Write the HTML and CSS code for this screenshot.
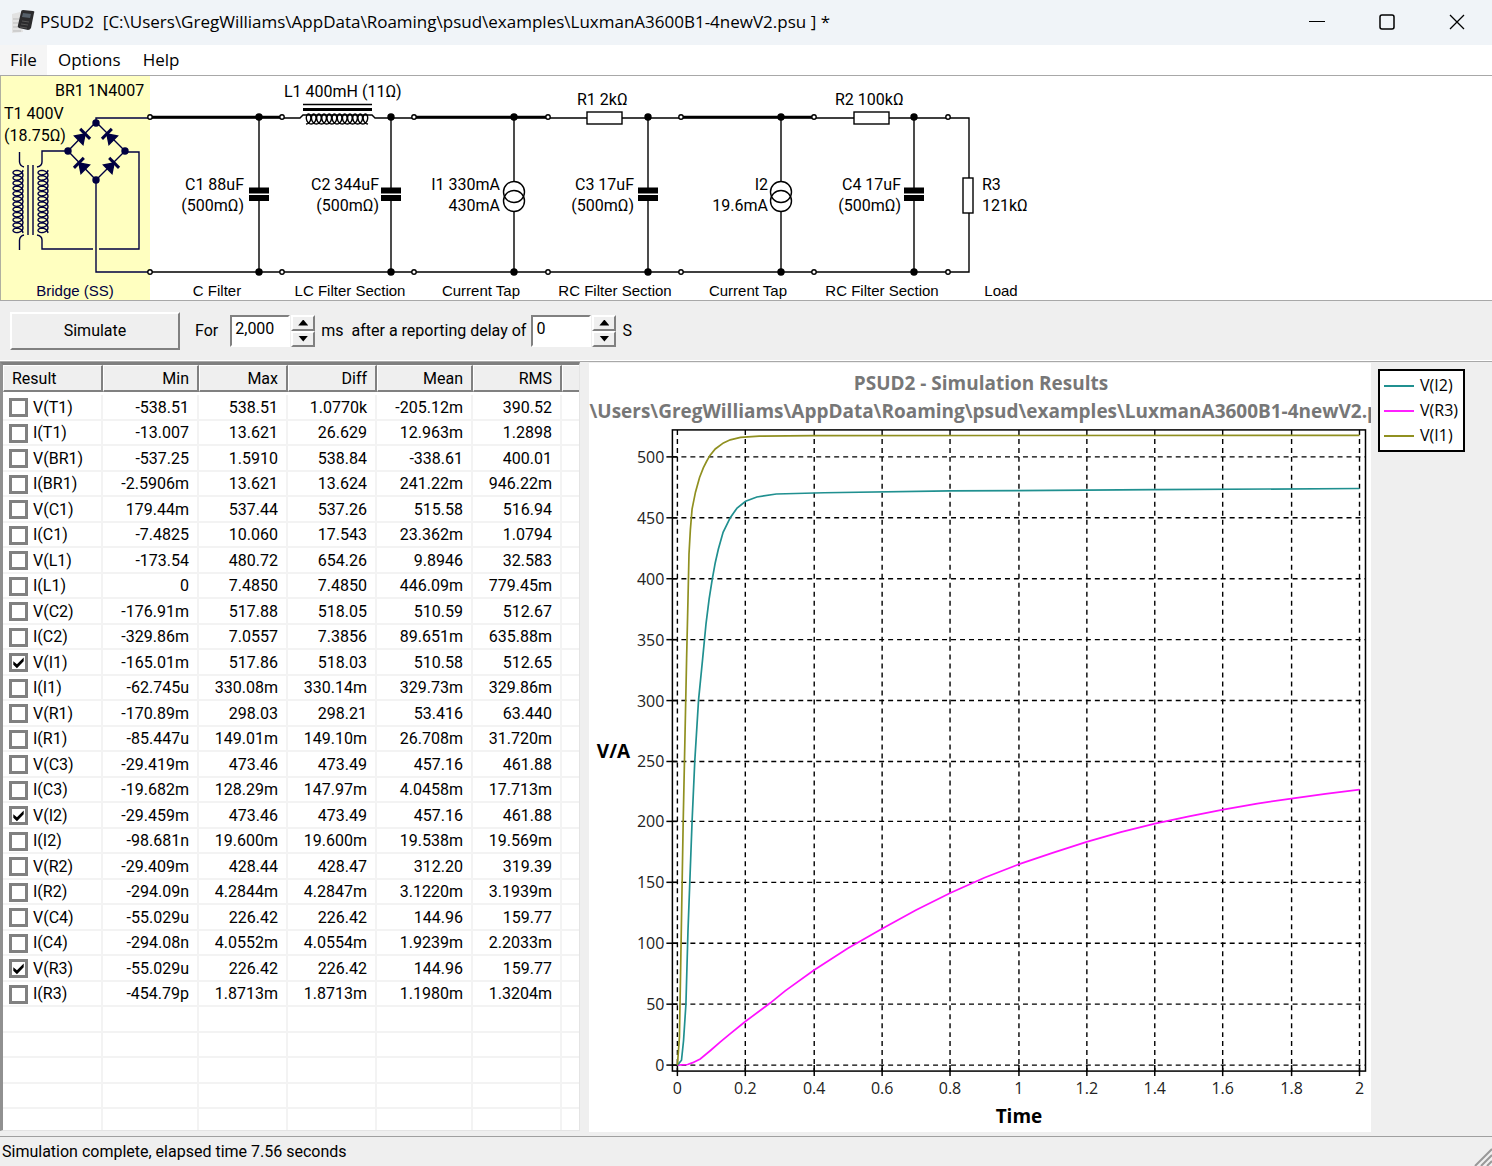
FILE: index.html
```html
<!DOCTYPE html>
<html lang="en">

<head>
    <meta charset="UTF-8" />
    <title>PSUD2</title>
    <link rel="stylesheet" href="styles.css">
</head>

<body>
    <header class="titlebar">
        <svg class="app-icon" width="24" height="26" viewBox="0 0 24 26">
            <path d="M1 5l8-2 3 20-11 1z" fill="#e2e2e2" />
            <path d="M2 10h6M2 14h5M2 18h5M2 22h8" stroke="#bbb" />
            <path d="M12 1l10 1q2 0 1 2l-3 15q-1 2-3 2l-9-2q-2-1-1-3l3-13q0-2 2-2z" fill="#2b2b2d" />
            <path d="M12 4l8 1-1 4-8-1z" fill="#56606a" />
            <path d="M11 12l7 1M10 15l7 1M9 18l7 1" stroke="#555" />
        </svg>
        <h1 class="title">PSUD2&nbsp; [C:\Users\GregWilliams\AppData\Roaming\psud\examples\LuxmanA3600B1-4newV2.psu ] *</h1>
        <div class="window-buttons">
            <button type="button" aria-label="Minimize">
                <svg width="16" height="16"><path d="M0 7.5h16" stroke="#000" /></svg>
            </button>
            <button type="button" aria-label="Maximize">
                <svg width="16" height="16"><rect x="1" y="1" width="14" height="14" rx="2" fill="none" stroke="#000" stroke-width="1.5" /></svg>
            </button>
            <button type="button" aria-label="Close">
                <svg width="16" height="16"><path d="M1 1l14 14M15 1l-14 14" stroke="#000" stroke-width="1.3" /></svg>
            </button>
        </div>
    </header>

    <nav class="menu">
        <button type="button" class="active">File</button>
        <button type="button">Options</button>
        <button type="button">Help</button>
    </nav>

    <section class="schematic">
        <svg width="1100" height="224" viewBox="0 0 1100 224">
            <defs>
                <g id="diode">
                    <path d="M-6 -6V6L3 0z" />
                    <path d="M3 -7V7" stroke-width="3" />
                </g>
                <g id="capacitor">
                    <path d="M0 42V112M0 125V196" />
                    <path d="M-10 114.5H10M-10 122H10" stroke-width="6" />
                </g>
                <g id="source">
                    <path d="M0 42V105M0 135V196" />
                    <circle cy="116" r="10.5" fill="none" />
                    <circle cy="125" r="10.5" fill="none" />
                </g>
                <circle id="dot" r="3" />
                <circle id="terminal" r="2.2" fill="#fff" />
            </defs>

            <rect x="0" y="0" width="150" height="224" fill="#ffffc0" />
            <path d="M0.5 0V224" stroke="#b0b0a0" />

            <!-- transformer and bridge -->
            <g class="wire navy">
                <path d="M19.5 76V86Q20 90 24 91M19.5 174V164Q20 160 24 159" />
                <path d="M68 75H42V86Q42 90 37 91M37 159Q42 160 42 164V173H93M99 173H139V76H125" />
                <path d="M28 89V159M33 89V159" />
                <path id="coilPrimary" />
                <path id="coilSecondary" />
                <path d="M96 46V42H148M96 46L68 75L96 104L125 75ZM96 104V196H148" />
                <g class="solid">
                    <use href="#dot" x="96" y="47" />
                    <use href="#dot" x="68" y="75" />
                    <use href="#dot" x="125" y="75" />
                    <use href="#dot" x="96" y="104" />
                    <use href="#diode" transform="translate(83 60) rotate(-45)" />
                    <use href="#diode" transform="translate(109 60) rotate(-135)" />
                    <use href="#diode" transform="translate(81 89) rotate(-135)" />
                    <use href="#diode" transform="translate(112 89) rotate(-45)" />
                </g>
            </g>

            <!-- rails -->
            <g class="wire">
                <path d="M150 196H969V42H150" />
                <path d="M152 41H281M416 41H547M683 41H813" stroke-width="2.6" />
                <rect x="282" y="38" width="108" height="8" fill="#fff" stroke="none" />
                <path d="M283 42H300L303 39H372L375 42H391M303 28.5H372" />
                <path d="M303 33.5H372" stroke-width="3" />
                <path id="coilChoke" />
                <use href="#capacitor" x="259" />
                <use href="#capacitor" x="391" />
                <use href="#source" x="514" />
                <use href="#capacitor" x="648" />
                <use href="#source" x="781" />
                <use href="#capacitor" x="914" />
                <rect x="587" y="36" width="35" height="12" fill="#fff" />
                <rect x="854" y="36" width="35" height="12" fill="#fff" />
                <rect x="963" y="102" width="10" height="35" fill="#fff" />
                <g id="nodes"></g>
            </g>

            <g class="part">
                <text x="55" y="20">BR1 1N4007</text>
                <text x="4" y="43">T1 400V</text>
                <text x="4" y="65">(18.75Ω)</text>
                <text x="284" y="21">L1 400mH (11Ω)</text>
                <text x="577" y="29">R1 2kΩ</text>
                <text x="835" y="29">R2 100kΩ</text>
                <text x="982" y="114">R3</text>
                <text x="982" y="135">121kΩ</text>
            </g>
            <g class="part right">
                <text x="244" y="114">C1 88uF</text>
                <text x="244" y="135">(500mΩ)</text>
                <text x="379" y="114">C2 344uF</text>
                <text x="379" y="135">(500mΩ)</text>
                <text x="500" y="114">I1 330mA</text>
                <text x="500" y="135">430mA</text>
                <text x="634" y="114">C3 17uF</text>
                <text x="634" y="135">(500mΩ)</text>
                <text x="768" y="114">I2</text>
                <text x="768" y="135">19.6mA</text>
                <text x="901" y="114">C4 17uF</text>
                <text x="901" y="135">(500mΩ)</text>
            </g>
            <g class="section-name">
                <text x="75" y="220" class="navy-text">Bridge (SS)</text>
                <text x="217" y="220">C Filter</text>
                <text x="350" y="220">LC Filter Section</text>
                <text x="481" y="220">Current Tap</text>
                <text x="615" y="220">RC Filter Section</text>
                <text x="748" y="220">Current Tap</text>
                <text x="882" y="220">RC Filter Section</text>
                <text x="1001" y="220">Load</text>
            </g>
        </svg>
    </section>

    <form class="toolbar" onsubmit="return false">
        <button type="submit" class="simulate">Simulate</button>
        <label for="duration">For</label>
        <div class="spinner">
            <input id="duration" type="text" value="2,000" />
            <div class="arrows">
                <button type="button" aria-label="Increase duration"><i class="up"></i></button>
                <button type="button" aria-label="Decrease duration"><i class="down"></i></button>
            </div>
        </div>
        <span class="unit">ms</span>
        <label for="delay" class="delay">after a reporting delay of</label>
        <div class="spinner">
            <input id="delay" type="text" value="0" />
            <div class="arrows">
                <button type="button" aria-label="Increase delay"><i class="up"></i></button>
                <button type="button" aria-label="Decrease delay"><i class="down"></i></button>
            </div>
        </div>
        <span class="unit">S</span>
    </form>

    <main class="main">
        <div class="results">
            <table>
                <colgroup>
                    <col class="c-name"><col class="c-wide"><col class="c-mid"><col class="c-mid"><col class="c-wide"><col class="c-mid"><col>
                </colgroup>
                <thead>
                    <tr>
                        <th>Result</th>
                        <th>Min</th>
                        <th>Max</th>
                        <th>Diff</th>
                        <th>Mean</th>
                        <th>RMS</th>
                        <th></th>
                    </tr>
                </thead>
                <tbody id="resultRows"></tbody>
            </table>
        </div>

        <div class="chart">
            <svg id="chart" viewBox="0 0 782 770">
                <text class="chart-title" x="392" y="27">PSUD2 - Simulation Results</text>
                <text class="chart-path" x="0" y="55">\Users\GregWilliams\AppData\Roaming\psud\examples\LuxmanA3600B1-4newV2.psu</text>
                <g id="grid"></g>
                <rect x="83" y="67" width="694" height="642" fill="none" stroke="#000" stroke-width="1.5" />
                <g id="curves"></g>
                <text class="axis-title" x="24" y="396">V/A</text>
                <text class="axis-title" x="430" y="761">Time</text>
            </svg>
        </div>

        <aside class="side">
            <ul class="legend">
                <li><span class="line teal"></span>V(I2)</li>
                <li><span class="line magenta"></span>V(R3)</li>
                <li><span class="line olive"></span>V(I1)</li>
            </ul>
        </aside>
    </main>

    <footer class="status">
        <span>Simulation complete, elapsed time 7.56 seconds</span>
        <svg class="grip" width="18" height="18"><path d="M1 18L18 1M7 18L18 7M13 18L18 13" stroke="#999" stroke-width="2" /></svg>
    </footer>

    <script src="app.js"></script>
</body>

</html>
```
FILE: styles.css
```css
* {
    box-sizing: border-box;
}

body {
    margin: 0;
    height: 100vh;
    display: flex;
    flex-direction: column;
    overflow: hidden;
    background: #efefef;
    color: #000;
    font-family: Roboto, "Liberation Sans", sans-serif;
    font-size: 16px;
}

button,
input {
    font: inherit;
    color: inherit;
    margin: 0;
}

.titlebar {
    flex: none;
    display: flex;
    align-items: center;
    height: 45px;
    padding: 0 0 2px 11px;
    background: #f0f4f8;
}

.app-icon {
    flex: none;
    margin-right: 5px;
}

.title {
    flex: 1;
    margin: 0;
    font-family: "Open Sans", "Noto Sans", sans-serif;
    font-size: 17px;
    font-weight: normal;
    line-height: 24px;
    white-space: nowrap;
}

.window-buttons {
    display: flex;
    align-self: stretch;
}

.window-buttons button {
    display: flex;
    align-items: center;
    justify-content: center;
    width: 70px;
    padding: 0;
    border: none;
    background: none;
}

.menu {
    flex: none;
    display: flex;
    height: 30px;
    background: #fff;
}

.menu button {
    padding: 0 11px 2px;
    border: none;
    background: none;
    font-family: "Open Sans", "Noto Sans", sans-serif;
    font-size: 17px;
}

.menu .active {
    padding: 0 10px 2px;
    background: #f5f5f5;
}

.schematic {
    flex: none;
    background: #fff;
    border-top: 1px solid #a8a8a8;
    border-bottom: 1px solid #a8a8a8;
    overflow: hidden;
}

.schematic svg,
.chart svg {
    display: block;
}

.wire {
    fill: none;
    stroke: #000;
    stroke-width: 1.4;
}

.navy {
    stroke: #000040;
}

.solid {
    fill: #000040;
}

.filled {
    fill: #000;
}

.right {
    text-anchor: end;
}

.section-name {
    font-family: "Liberation Sans", Arial, sans-serif;
    font-size: 15px;
    text-anchor: middle;
}

.navy-text {
    fill: #000040;
}

.toolbar {
    flex: none;
    display: flex;
    align-items: center;
    height: 60px;
    padding-left: 10px;
    border-bottom: 1px solid #fff;
}

.simulate,
.arrows button {
    background: #efefef;
    border: 2px solid;
    border-color: #fff #808080 #808080 #fff;
}

.simulate {
    width: 170px;
    height: 38px;
    margin-right: 15px;
    padding: 0;
}

.spinner {
    display: flex;
    gap: 1px;
    margin: 0 6px 0 12px;
}

.spinner input {
    width: 60px;
    height: 32px;
    padding: 0 3px 4px;
    background: #fff;
    border: 2px solid;
    border-color: #808080 #fff #fff #808080;
    border-radius: 0;
    outline: none;
}

.arrows {
    display: flex;
    flex-direction: column;
}

.arrows button {
    display: flex;
    align-items: center;
    justify-content: center;
    width: 24px;
    height: 16px;
    padding: 0;
}

.up,
.down {
    width: 10px;
    height: 6px;
    background: #000;
    clip-path: polygon(50% 0, 100% 100%, 0 100%);
}

.down {
    clip-path: polygon(0 0, 100% 0, 50% 100%);
}

.delay {
    margin-left: 8px;
}

.delay + .spinner {
    margin-left: 5px;
}

.main {
    flex: 1;
    min-height: 0;
    display: flex;
    border-top: 1px solid #a8a8a8;
}

.results {
    flex: none;
    width: 580px;
    margin-bottom: 5px;
    background: #fff;
    border-top: 3px solid #808080;
    border-left: 3px solid #909090;
    border-bottom: 1px solid #e4e4e4;
    border-right: 1px solid #e4e4e4;
    overflow: hidden;
}

table {
    width: 100%;
    table-layout: fixed;
    border-spacing: 0;
}

.c-name {
    width: 100px;
}

.c-wide {
    width: 96px;
}

.c-mid {
    width: 89px;
}

th {
    height: 27px;
    padding: 1px 8px 0;
    background: #efefef;
    border: solid;
    border-width: 1px 2px 2px 1px;
    border-color: #fff #808080 #808080 #fff;
    font-weight: normal;
    text-align: right;
}

th:first-child {
    text-align: left;
}

th:last-child {
    border-right: none;
}

tbody::before {
    content: "";
    display: table-row;
    height: 3px;
}

td {
    height: 25px;
    padding: 1px 8px 0;
    border-right: 2px solid #f3f3f3;
    border-bottom: 2px solid #f3f3f3;
    line-height: 20px;
    text-align: right;
}

tr:nth-child(odd) td {
    height: 26px;
}

td:first-child {
    padding: 1px 0 0 6px;
    text-align: left;
}

td:last-child {
    border-right: none;
}

td label {
    display: flex;
    align-items: center;
    gap: 5px;
}

td input {
    appearance: none;
    width: 19px;
    height: 19px;
    background: #fff;
    border: 3px solid #808080;
}

td input:checked::before {
    content: "";
    display: block;
    height: 13px;
    background: #000;
    clip-path: polygon(10% 40%, 38% 64%, 90% 12%, 90% 40%, 38% 94%, 10% 68%);
}

.chart {
    flex: 1;
    min-width: 0;
    margin: 1px 0 4px 9px;
    background: #fff;
}

.chart svg {
    width: 100%;
    height: 100%;
    overflow: hidden;
    font-family: "Open Sans", "Noto Sans", sans-serif;
}

.chart-title,
.chart-path {
    font-size: 19px;
    font-weight: bold;
    fill: #777;
}

.chart-title,
.axis-title,
.x-label {
    text-anchor: middle;
}

.axis-title {
    font-size: 19px;
    font-weight: bold;
}

.x-label,
.y-label {
    font-size: 16px;
    fill: #222;
}

.y-label {
    text-anchor: end;
}

.grid-line {
    stroke: #000;
    stroke-width: 1.4;
    stroke-dasharray: 5 4;
}

.tick {
    stroke: #000;
    stroke-width: 1.5;
}

.curve {
    fill: none;
    stroke-width: 1.7;
}

.side {
    flex: none;
    width: 121px;
    padding: 7px;
}

.legend {
    width: 87px;
    margin: 0;
    padding: 2px 4px;
    list-style: none;
    background: #fff;
    border: 2px solid #000;
    font-family: "Open Sans", "Noto Sans", sans-serif;
    font-size: 16px;
    line-height: 25px;
}

.legend li {
    display: flex;
    align-items: center;
    gap: 6px;
}

.line {
    width: 30px;
    height: 2px;
}

.teal {
    background: #209090;
}

.magenta {
    background: #ff20ff;
}

.olive {
    background: #909020;
}

.status {
    flex: none;
    display: flex;
    align-items: center;
    justify-content: space-between;
    height: 30px;
    padding-left: 2px;
    border-top: 1px solid #a0a0a0;
}

.grip {
    align-self: flex-end;
}
```
FILE: app.js
```js
const results = [
    ["V(T1)", "-538.51", "538.51", "1.0770k", "-205.12m", "390.52"],
    ["I(T1)", "-13.007", "13.621", "26.629", "12.963m", "1.2898"],
    ["V(BR1)", "-537.25", "1.5910", "538.84", "-338.61", "400.01"],
    ["I(BR1)", "-2.5906m", "13.621", "13.624", "241.22m", "946.22m"],
    ["V(C1)", "179.44m", "537.44", "537.26", "515.58", "516.94"],
    ["I(C1)", "-7.4825", "10.060", "17.543", "23.362m", "1.0794"],
    ["V(L1)", "-173.54", "480.72", "654.26", "9.8946", "32.583"],
    ["I(L1)", "0", "7.4850", "7.4850", "446.09m", "779.45m"],
    ["V(C2)", "-176.91m", "517.88", "518.05", "510.59", "512.67"],
    ["I(C2)", "-329.86m", "7.0557", "7.3856", "89.651m", "635.88m"],
    ["V(I1)", "-165.01m", "517.86", "518.03", "510.58", "512.65"],
    ["I(I1)", "-62.745u", "330.08m", "330.14m", "329.73m", "329.86m"],
    ["V(R1)", "-170.89m", "298.03", "298.21", "53.416", "63.440"],
    ["I(R1)", "-85.447u", "149.01m", "149.10m", "26.708m", "31.720m"],
    ["V(C3)", "-29.419m", "473.46", "473.49", "457.16", "461.88"],
    ["I(C3)", "-19.682m", "128.29m", "147.97m", "4.0458m", "17.713m"],
    ["V(I2)", "-29.459m", "473.46", "473.49", "457.16", "461.88"],
    ["I(I2)", "-98.681n", "19.600m", "19.600m", "19.538m", "19.569m"],
    ["V(R2)", "-29.409m", "428.44", "428.47", "312.20", "319.39"],
    ["I(R2)", "-294.09n", "4.2844m", "4.2847m", "3.1220m", "3.1939m"],
    ["V(C4)", "-55.029u", "226.42", "226.42", "144.96", "159.77"],
    ["I(C4)", "-294.08n", "4.0552m", "4.0554m", "1.9239m", "2.2033m"],
    ["V(R3)", "-55.029u", "226.42", "226.42", "144.96", "159.77"],
    ["I(R3)", "-454.79p", "1.8713m", "1.8713m", "1.1980m", "1.3204m"]
];
const plotted = ["V(I1)", "V(I2)", "V(R3)"];
const blankRows = 5;

// plot area: pixel position of the origin and pixels per unit
const origin = { x: 88, y: 703 };
const scale = { x: 341.5, y: 1.218 };

// [seconds, volts]
const curves = [
    {
        color: "#ff10ff",
        points: [[0, 0], [0.03, 0.5], [0.045, 2], [0.067, 5], [0.097, 12], [0.126, 19], [0.149, 24.5], [0.2, 36],
            [0.272, 51], [0.316, 61], [0.4, 78], [0.5, 96], [0.6, 112], [0.7, 127.5], [0.8, 141.5], [0.9, 154], [1, 165],
            [1.1, 174.5], [1.2, 183.5], [1.3, 191.5], [1.4, 198.5], [1.5, 204.5], [1.6, 210], [1.7, 215], [1.8, 219], [1.9, 223], [2, 226.5]]
    },
    {
        color: "#209090",
        points: [[0, 0], [0.012, 4], [0.018, 20], [0.025, 50], [0.031, 110], [0.043, 200], [0.051, 250], [0.062, 300],
            [0.074, 334], [0.084, 363], [0.093, 383], [0.102, 399], [0.111, 413], [0.12, 424], [0.134, 438], [0.155, 450],
            [0.175, 458], [0.2, 463.5], [0.233, 467], [0.29, 469.5], [0.43, 470.5], [0.8, 472], [1.4, 473], [2, 474]]
    },
    {
        color: "#909020",
        points: [[0, 0], [0.006, 23], [0.01, 87], [0.017, 200], [0.027, 334], [0.031, 382], [0.034, 420], [0.038, 440],
            [0.043, 457], [0.053, 471], [0.065, 483], [0.076, 491], [0.085, 496], [0.095, 501], [0.111, 506.5],
            [0.135, 511.5], [0.155, 514], [0.185, 516], [0.24, 517], [0.4, 517.5], [2, 517.7]]
    }
];

function svgEl(parent, name, attrs, text) {
    const el = document.createElementNS("http://www.w3.org/2000/svg", name);
    for (const key in attrs) {
        el.setAttribute(key, attrs[key]);
    }
    if (text !== undefined) el.textContent = text;
    parent.appendChild(el);
    return el;
}

function renderRows() {
    const body = document.getElementById("resultRows");
    results.forEach(row => {
        const tr = body.insertRow();
        const label = document.createElement("label");
        const box = document.createElement("input");
        box.type = "checkbox";
        box.checked = plotted.includes(row[0]);
        label.append(box, row[0]);
        tr.insertCell().appendChild(label);
        row.slice(1).forEach(value => {
            tr.insertCell().textContent = value;
        });
        tr.insertCell();
    });
    for (let i = 0; i < blankRows; i++) {
        const tr = body.insertRow();
        for (let c = 0; c < 7; c++) tr.insertCell();
    }
}

function renderChart() {
    const grid = document.getElementById("grid");
    for (let i = 0; i <= 10; i++) {
        const x = Math.round(origin.x + i * 0.2 * scale.x);
        svgEl(grid, "path", { class: "grid-line", d: `M${x} 67V709` });
        svgEl(grid, "path", { class: "tick", d: `M${x} 703V714` });
        svgEl(grid, "text", { class: "x-label", x: x, y: 732 }, String(i * 2 / 10));

        const y = Math.round(origin.y - i * 50 * scale.y);
        svgEl(grid, "path", { class: "grid-line", d: `M83 ${y}H777` });
        svgEl(grid, "path", { class: "tick", d: `M77 ${y}H88` });
        svgEl(grid, "text", { class: "y-label", x: 75, y: y + 6 }, String(i * 50));
    }

    const group = document.getElementById("curves");
    curves.forEach(curve => {
        const points = curve.points.map(([t, v]) => `${origin.x + t * scale.x},${origin.y - v * scale.y}`);
        svgEl(group, "polyline", { class: "curve", stroke: curve.color, points: points.join(" ") });
    });
}

// winding drawn as a looping line from start to end
function coil(id, center, start, end, turns, vertical) {
    const r = 5;
    let d = "";
    for (let i = 0; i <= turns * 16; i++) {
        const a = i / 16 * Math.PI * 2;
        const along = start + (end - start) * i / (turns * 16) + 3.5 * Math.sin(a);
        const across = center + r * Math.cos(a);
        d += (i ? "L" : "M") + (vertical ? `${across} ${along}` : `${along} ${across}`);
    }
    document.getElementById(id).setAttribute("d", d);
}

function renderNodes() {
    const nodes = document.getElementById("nodes");
    [41, 196].forEach(y => {
        [150, 282, 414, 548, 681, 814, 948].forEach(x => svgEl(nodes, "use", { href: "#terminal", x, y }));
        [259, 391, 514, 648, 781, 914].forEach(x => svgEl(nodes, "use", { href: "#dot", class: "filled", x, y }));
    });
}

renderRows();
renderChart();
renderNodes();
coil("coilPrimary", 18, 94, 157, 12, true);
coil("coilSecondary", 43, 94, 157, 12, true);
coil("coilChoke", 43, 306, 368, 12, false);
```
